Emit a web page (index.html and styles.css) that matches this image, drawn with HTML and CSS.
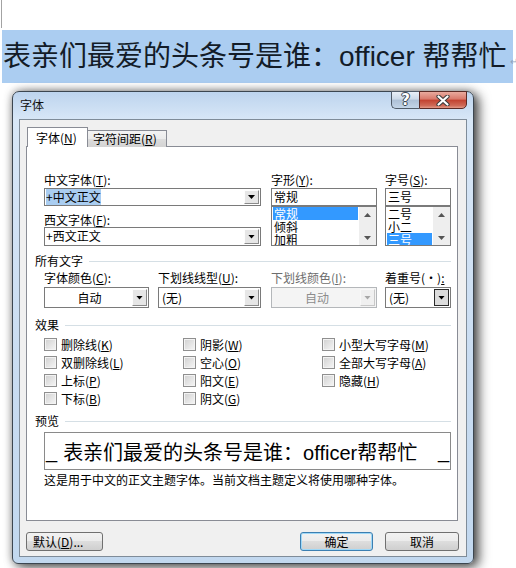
FILE: index.html
```html
<!DOCTYPE html>
<html lang="zh-CN">
<head>
  <meta charset="UTF-8">
  <title>字体</title>
  <link rel="stylesheet" href="styles.css">
</head>
<body>
  <div class="doc">
    <div class="doc-top"></div>
    <div class="doc-line">
      <span class="doc-text">表亲们最爱的头条号是谁：officer 帮帮忙</span><span class="pilcrow">↵</span>
    </div>
  </div>

  <div class="dialog">
    <div class="titlebar">
      <span class="title">字体</span>
      <div class="caption-btns">
        <span class="cap-btn cap-help">?</span>
        <span class="cap-btn cap-close">
          <svg width="14" height="11" viewBox="0 0 14 11">
            <path d="M2.5 1.5 L11.5 9.5 M11.5 1.5 L2.5 9.5" stroke="#3b3b3b" stroke-width="4.2" stroke-linecap="round"/>
            <path d="M2.5 1.5 L11.5 9.5 M11.5 1.5 L2.5 9.5" stroke="#fff" stroke-width="2.2" stroke-linecap="round"/>
          </svg>
        </span>
      </div>
    </div>

    <div class="client">
      <div class="tabs">
        <span class="tab tab--active">字体(<u>N</u>)</span>
        <span class="tab tab--second">字符间距(<u>R</u>)</span>
      </div>

      <div class="panel">
        <div class="font-row">
          <div class="col-main">
            <div class="label">中文字体(<u>T</u>):</div>
            <div class="combo combo--first">
              <span class="combo-text"><span class="combo-sel">+中文正文</span></span>
              <span class="drop"></span>
            </div>
            <div class="label label--gap">西文字体(<u>F</u>):</div>
            <div class="combo combo--second">
              <span class="combo-text">+西文正文</span>
              <span class="drop"></span>
            </div>
          </div>

          <div class="col-style">
            <div class="label">字形(<u>Y</u>):</div>
            <div class="textbox">常规</div>
            <div class="listbox">
              <div class="list-items">
                <div class="list-item list-item--sel">常规</div>
                <div class="list-item">倾斜</div>
                <div class="list-item">加粗</div>
              </div>
              <div class="scroll"><span class="arrow-up"></span><span class="arrow-down"></span></div>
            </div>
          </div>

          <div class="col-size">
            <div class="label">字号(<u>S</u>):</div>
            <div class="textbox">三号</div>
            <div class="listbox">
              <div class="list-items">
                <div class="list-item">二号</div>
                <div class="list-item">小二</div>
                <div class="list-item list-item--sel">三号</div>
              </div>
              <div class="scroll"><span class="arrow-up"></span><span class="arrow-down"></span></div>
            </div>
          </div>
        </div>

        <div class="group-title group-title--all">所有文字</div>

        <div class="attr-row">
          <div class="field field--color">
            <div class="label">字体颜色(<u>C</u>):</div>
            <div class="combo combo--tall">
              <span class="combo-text combo-text--center">自动</span>
              <span class="drop"></span>
            </div>
          </div>
          <div class="field field--uline">
            <div class="label">下划线线型(<u>U</u>):</div>
            <div class="combo combo--tall">
              <span class="combo-text">(无)</span>
              <span class="drop"></span>
            </div>
          </div>
          <div class="field field--ucolor">
            <div class="label label--disabled">下划线颜色(<u>I</u>):</div>
            <div class="combo combo--tall combo--disabled">
              <span class="combo-text combo-text--center">自动</span>
              <span class="drop"></span>
            </div>
          </div>
          <div class="field field--emph">
            <div class="label">着重号(·)<u>:</u></div>
            <div class="combo combo--tall">
              <span class="combo-text">(无)</span>
              <span class="drop drop--focus"></span>
            </div>
          </div>
        </div>

        <div class="group-title group-title--effects">效果</div>

        <div class="checks">
          <label class="check"><span class="box"></span>删除线(<u>K</u>)</label>
          <label class="check"><span class="box"></span>阴影(<u>W</u>)</label>
          <label class="check"><span class="box"></span>小型大写字母(<u>M</u>)</label>
          <label class="check"><span class="box"></span>双删除线(<u>L</u>)</label>
          <label class="check"><span class="box"></span>空心(<u>O</u>)</label>
          <label class="check"><span class="box"></span>全部大写字母(<u>A</u>)</label>
          <label class="check"><span class="box"></span>上标(<u>P</u>)</label>
          <label class="check"><span class="box"></span>阳文(<u>E</u>)</label>
          <label class="check"><span class="box"></span>隐藏(<u>H</u>)</label>
          <label class="check"><span class="box"></span>下标(<u>B</u>)</label>
          <label class="check"><span class="box"></span>阴文(<u>G</u>)</label>
        </div>

        <div class="group-title group-title--preview">预览</div>

        <div class="preview">
          <span class="preview-bar">_</span>
          <span class="preview-text">表亲们最爱的头条号是谁：officer帮帮忙</span>
          <span class="preview-bar">_</span>
        </div>
        <div class="preview-note">这是用于中文的正文主题字体。当前文档主题定义将使用哪种字体。</div>
      </div>

      <div class="buttons">
        <span class="btn btn--default">默认(<u>D</u>)...</span>
        <span class="btn btn--ok">确定</span>
        <span class="btn btn--cancel">取消</span>
      </div>
    </div>
  </div>
</body>
</html>
```

FILE: styles.css
```css
body, html {
  margin: 0;
  font-family: "Noto Sans CJK SC", sans-serif;
  color: #000;
}

body {
  width: 516px;
  height: 568px;
  overflow: hidden;
  background: #fff;
}

u {
  text-decoration: underline;
  text-underline-offset: 1px;
}

/* document behind the dialog */

.doc-top {
  height: 28px;
  margin-left: 1px;
  margin-bottom: 2px;
  border-left: 1px solid #a3a3a3;
}

.doc-line {
  margin-left: 2px;
  width: 511px;
  height: 53px;
  padding-left: 1px;
  box-sizing: border-box;
  background: #abcdf1;
  display: flex;
  align-items: center;
  font: 28px/53px "Liberation Sans", "Noto Sans CJK SC", sans-serif;
  color: #131c28;
  white-space: nowrap;
}

.pilcrow {
  font-size: 10px;
  line-height: 10px;
  color: #8ea3bd;
  margin: 10px 0 0 3px;
}

/* dialog frame */

.dialog {
  margin: 8px 0 0 12px;
  width: 462px;
  height: 473px;
  box-sizing: border-box;
  border: 1px solid #3c4650;
  border-radius: 7px 7px 6px 6px;
  padding: 0 6px 6px;
  background: linear-gradient(#bdd4ee, #d8e7f7 28px, #c9dcf1 60%, #c2d8ef);
  box-shadow: 5px 3px 12px rgba(0, 0, 0, 0.65), 0 0 8px rgba(0, 0, 0, 0.35);
  display: flex;
  flex-direction: column;
}

.titlebar {
  height: 27px;
  display: flex;
  align-items: flex-start;
  flex-shrink: 0;
}

.title {
  margin: 6px 0 0 1px;
  font-size: 12px;
  line-height: 14px;
  color: #101010;
}

.caption-btns {
  margin-left: auto;
  margin-top: -1px;
  display: flex;
}

.cap-btn {
  height: 18px;
  box-sizing: border-box;
  border: 1px solid #4f5b68;
  display: flex;
  align-items: center;
  justify-content: center;
}

.cap-help {
  width: 28px;
  border-right: none;
  border-radius: 0 0 0 5px;
  background: linear-gradient(#e9f0f8, #cbd9e8 45%, #adc0d6 50%, #c3d5e8);
  font: bold 15px/16px "DejaVu Sans", sans-serif;
  color: #fff;
  text-shadow: 0 0 1px #2e3a47, 1px 0 0 #3e4a57, -1px 0 0 #3e4a57, 0 1px 0 #3e4a57, 0 -1px 0 #3e4a57;
}

.cap-close {
  width: 48px;
  border-radius: 0 0 5px 0;
  border-color: #5a2a25;
  background: linear-gradient(#e9aa9e, #d8786a 45%, #c2412f 50%, #cf6a57 85%, #e39a88);
}

.client {
  flex: 1;
  border: 1px solid #7f8c99;
  background: #f0f0f0;
  padding: 7px 8px 0 6px;
  display: flex;
  flex-direction: column;
}

/* tabs */

.tabs {
  display: flex;
  align-items: flex-end;
  padding-left: 1px;
  margin-bottom: -1px;
  position: relative;
  z-index: 1;
}

.tab {
  height: 17px;
  box-sizing: border-box;
  border: 1px solid #898c95;
  border-bottom: none;
  font-size: 12px;
  line-height: 16px;
  white-space: nowrap;
  background: linear-gradient(#f3f3f3, #ebebeb 50%, #dddddd 50%, #d3d3d3);
}

.tab--active {
  width: 61px;
  height: 20px;
  padding: 2px 0 0 8px;
  background: #fff;
}

.tab--second {
  width: 79px;
  padding-left: 5px;
  border-left: none;
}

/* tab page */

.panel {
  height: 375px;
  box-sizing: border-box;
  border: 1px solid #898c95;
  background: #fff;
  padding: 26px 6px 0 17px;
  font-size: 12px;
}

.label {
  height: 14px;
  line-height: 14px;
  white-space: nowrap;
}

.label--gap {
  margin-top: 7px;
}

.label--disabled {
  color: #6d6d6d;
}

.font-row {
  display: flex;
}

.col-main {
  width: 217px;
}

.col-style {
  width: 106px;
  margin-left: 10px;
}

.col-size {
  width: 66px;
  margin-left: 8px;
}

.combo {
  box-sizing: border-box;
  border: 1px solid #7a7a7a;
  background: #fff;
  display: flex;
}

.combo--first {
  height: 18px;
  margin-top: 1px;
}

.combo--second {
  height: 19px;
}

.combo--tall {
  height: 21px;
  margin-top: 2px;
}

.combo-text {
  flex: 1;
  padding-left: 1px;
  line-height: 16px;
  white-space: nowrap;
  overflow: hidden;
}

.combo--tall .combo-text {
  line-height: 19px;
  padding-left: 3px;
}

.combo-text--center {
  text-align: center;
}

.combo-sel {
  background: #a9cdf1;
}

.drop {
  width: 15px;
  margin: 1px;
  box-sizing: border-box;
  border: 1px solid;
  border-color: #fdfdfd #8a8a8a #8a8a8a #fdfdfd;
  background: #e6e6e6;
  display: flex;
  align-items: center;
  justify-content: center;
}

.drop::before {
  content: "";
  width: 7px;
  height: 4px;
  background: #000;
  clip-path: polygon(0 0, 100% 0, 50% 100%);
}

.drop--focus {
  border-color: #2a2a2a;
  background: #dcdcdc;
}

.combo--disabled {
  border-color: #b4b7ba;
  background: #f4f4f4;
  color: #8c8c8c;
}

.combo--disabled .drop {
  border-color: #f8f8f8 #c8c8c8 #c8c8c8 #f8f8f8;
  background: #f0f0f0;
}

.combo--disabled .drop::before {
  background: #a8a8a8;
}

.textbox {
  height: 18px;
  margin-top: 1px;
  box-sizing: border-box;
  border: 1px solid #7a7a7a;
  padding-left: 2px;
  line-height: 16px;
}

.listbox {
  height: 40px;
  box-sizing: border-box;
  border: 1px solid #7a7a7a;
  display: flex;
  overflow: hidden;
}

.list-items {
  flex: 1;
  padding: 0 1px;
  overflow: hidden;
}

.list-item {
  height: 13px;
  line-height: 13px;
  padding-left: 1px;
  overflow: hidden;
}

.list-item--sel {
  background: #3399ff;
  color: #fff;
}

.scroll {
  width: 17px;
  background: #eeeeee;
  display: flex;
  flex-direction: column;
  align-items: center;
  justify-content: space-between;
  padding: 6px 0 5px;
  box-sizing: border-box;
}

.arrow-up,
.arrow-down {
  width: 7px;
  height: 4px;
  background: #555;
}

.arrow-up {
  clip-path: polygon(50% 0, 100% 100%, 0 100%);
}

.arrow-down {
  clip-path: polygon(0 0, 100% 0, 50% 100%);
}

/* group headings */

.group-title {
  margin-left: -9px;
  height: 14px;
  line-height: 14px;
  display: flex;
  align-items: center;
}

.group-title::after {
  content: "";
  flex: 1;
  height: 1px;
  margin-left: 6px;
  background: #d5dfe5;
}

.group-title--all {
  margin-top: 8px;
}

.group-title--effects {
  margin-top: 10px;
}

.group-title--preview {
  margin-top: 7px;
}

.attr-row {
  display: flex;
  margin-top: 3px;
}

.field--color {
  width: 105px;
}

.field--uline {
  width: 103px;
  margin-left: 9px;
}

.field--ucolor {
  width: 106px;
  margin-left: 10px;
}

.field--emph {
  width: 66px;
  margin-left: 8px;
}

/* effects */

.checks {
  display: grid;
  grid-template-columns: 139px 139px auto;
  grid-auto-rows: 18px;
  margin-top: 3px;
}

.check {
  display: flex;
  align-items: center;
  white-space: nowrap;
}

.box {
  width: 13px;
  height: 13px;
  box-sizing: border-box;
  margin-right: 4px;
  border: 1px solid #8f8f8f;
  background: linear-gradient(135deg, #d0d0d0, #f6f6f6);
  box-shadow: inset 0 0 0 1px #f3f3f3;
}

/* preview */

.preview {
  height: 38px;
  margin-top: 4px;
  box-sizing: border-box;
  border: 1px solid #8a8a8a;
  display: flex;
  align-items: center;
  padding: 0 1px;
  font-family: "Liberation Sans", "Noto Sans CJK SC", sans-serif;
  font-size: 20px;
  white-space: nowrap;
}

.preview-text {
  flex: 1;
  padding-left: 6px;
}

.preview-note {
  margin-top: 3px;
  line-height: 14px;
}

/* buttons */

.buttons {
  display: flex;
  gap: 12px;
  margin-top: 11px;
  margin-right: -1px;
}

.btn {
  height: 19px;
  box-sizing: border-box;
  border: 1px solid #707070;
  border-radius: 3px;
  background: linear-gradient(#f2f2f2, #ebebeb 50%, #dddddd 50%, #cfcfcf);
  font-size: 12px;
  line-height: 17px;
  text-align: center;
  white-space: nowrap;
}

.btn--default {
  width: 77px;
  text-align: left;
  padding-left: 6px;
}

.btn--ok {
  width: 73px;
  margin-left: auto;
  border-color: #3c7fb1;
  box-shadow: inset 0 0 0 1px #9fd8f7;
}

.btn--cancel {
  width: 74px;
}
```
